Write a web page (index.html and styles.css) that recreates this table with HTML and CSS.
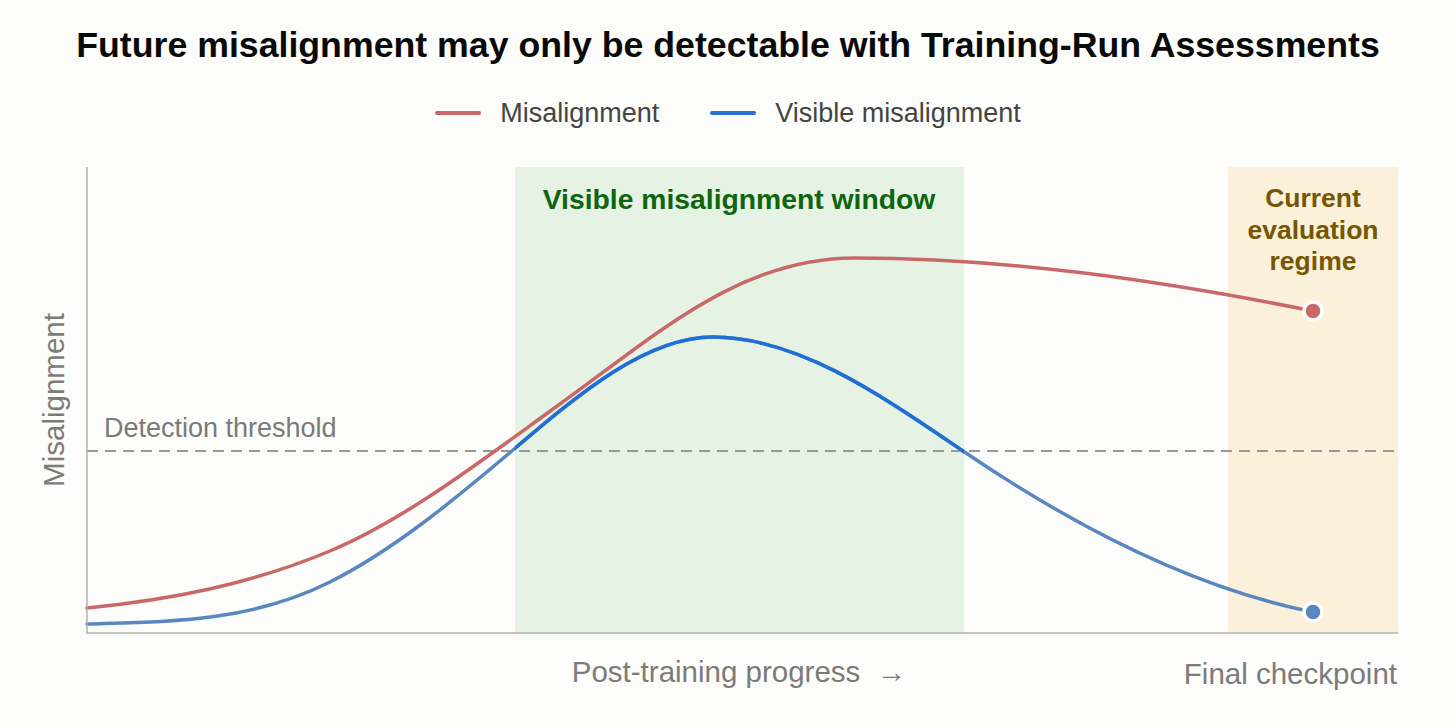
FILE: index.html
```html
<!DOCTYPE html>
<html lang="en">
<head>
<meta charset="utf-8">
<title>Future misalignment may only be detectable with Training-Run Assessments</title>
<link rel="stylesheet" href="styles.css">
</head>
<body>
<main class="figure">
  <h1 class="title">Future misalignment may only be detectable with Training-Run Assessments</h1>
  <ul class="legend">
    <li class="legend-item"><span class="swatch swatch-red"></span><span>Misalignment</span></li>
    <li class="legend-item"><span class="swatch swatch-blue"></span><span>Visible misalignment</span></li>
  </ul>
  <svg class="chart" viewBox="0 129 1456 599" width="1456" height="599" xmlns="http://www.w3.org/2000/svg">
    <defs>
      <clipPath id="window"><rect x="515" y="160" width="449" height="480"/></clipPath>
    </defs>
    <rect class="band-green" x="515" y="167" width="449" height="466"/>
    <rect class="band-amber" x="1228" y="167" width="170" height="466"/>
    <text class="band-label band-label-green" x="739" y="209">Visible misalignment window</text>
    <text class="band-label band-label-amber"><tspan x="1313" y="207">Current</tspan><tspan x="1313" y="238.5">evaluation</tspan><tspan x="1313" y="270">regime</tspan></text>
    <line class="threshold" x1="87" y1="451" x2="1398" y2="451"/>
    <text class="threshold-label" x="104" y="437">Detection threshold</text>
    <path class="curve curve-red" d="M87,608 C168,599.9 249,585 330,551 C406.7,518.8 483.3,459.2 560,404 C658.3,333.2 740,258 855,258 C1007.7,258 1160.3,280.5 1313,311"/>
    <path class="curve curve-blue-muted" d="M87,624 C168,621.6 249,622.5 330,582 C391,551.5 452,501.9 513,450 C579.7,393.3 646.3,337 713,337 C797.7,337 880.3,394.8 963,451 C1079.7,530.4 1196.3,588.7 1313,612"/>
    <path class="curve curve-blue" clip-path="url(#window)" d="M87,624 C168,621.6 249,622.5 330,582 C391,551.5 452,501.9 513,450 C579.7,393.3 646.3,337 713,337 C797.7,337 880.3,394.8 963,451 C1079.7,530.4 1196.3,588.7 1313,612"/>
    <line class="axis" x1="87" y1="167" x2="87" y2="633.75"/>
    <line class="axis" x1="86.25" y1="633" x2="1398" y2="633"/>
    <circle class="dot dot-red" cx="1313" cy="311" r="9"/>
    <circle class="dot dot-blue" cx="1313" cy="612" r="9"/>
    <text class="axis-label" transform="translate(64 400) rotate(-90)" text-anchor="middle">Misalignment</text>
    <text class="axis-label" x="739" y="682" text-anchor="middle">Post-training progress&#160;&#160;→</text>
    <text class="axis-label" x="1397" y="684" text-anchor="end">Final checkpoint</text>
  </svg>
</main>
</body>
</html>
```

FILE: styles.css
```css
html, body {
  margin: 0;
  padding: 0;
  background: #fcfcfa;
}

body {
  width: 1456px;
  height: 728px;
  overflow: hidden;
  font-family: "Liberation Sans", Arial, Helvetica, sans-serif;
}

.figure {
  display: flex;
  flex-direction: column;
  align-items: center;
}

.title {
  margin: 0;
  padding-top: 24px;
  font-size: 35.7px;
  line-height: 42px;
  font-weight: 700;
  color: #0a0a0a;
  text-align: center;
  white-space: nowrap;
}

.legend {
  list-style: none;
  margin: 31px 0 0;
  padding: 0;
  height: 32px;
  display: flex;
  align-items: center;
  gap: 51px;
}

.legend-item {
  display: flex;
  align-items: center;
  gap: 19px;
  font-size: 27px;
  line-height: 32px;
  color: #444444;
}

.swatch {
  display: block;
  width: 46px;
  height: 4px;
  border-radius: 2px;
}

.swatch-red { background: #c86868; }
.swatch-blue { background: #2a72d2; }

.chart {
  display: block;
  flex: none;
}

.band-green { fill: #e6f2e3; }
.band-amber { fill: #fbf0da; }

.band-label {
  font-family: "Liberation Sans", Arial, sans-serif;
  font-weight: 700;
  text-anchor: middle;
}

.band-label-green {
  font-size: 28.3px;
  fill: #0d650d;
}

.band-label-amber {
  font-size: 26.5px;
  fill: #765600;
}

.threshold {
  stroke: #999996;
  stroke-width: 2;
  stroke-dasharray: 11 7;
}

.threshold-label {
  font-family: "Liberation Sans", Arial, sans-serif;
  font-size: 27px;
  fill: #7a7a78;
}

.curve {
  fill: none;
  stroke-width: 3.5;
  stroke-linecap: round;
  stroke-linejoin: round;
}

.curve-red { stroke: #c86868; }
.curve-blue-muted { stroke: #5a87c0; }
.curve-blue { stroke: #1f6fd6; }

.axis {
  stroke: #b3b3ad;
  stroke-width: 1.5;
}

.dot {
  stroke: #ffffff;
  stroke-width: 3.5;
}

.dot-red { fill: #c86868; }
.dot-blue { fill: #5a87c0; }

.axis-label {
  font-family: "Liberation Sans", Arial, sans-serif;
  font-size: 29.5px;
  fill: #7b7b79;
}
```
